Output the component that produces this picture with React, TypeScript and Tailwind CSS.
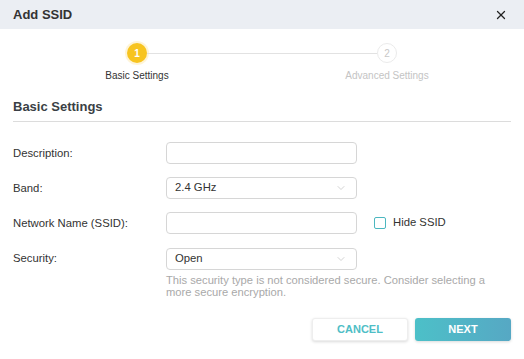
import { X, ChevronDown } from "lucide-react";

const font = { fontFamily: '"Liberation Sans", Arial, sans-serif' };

function Field({ label, children }: { label: string; children: React.ReactNode }) {
  return (
    <div className="flex items-start">
      <span className="w-[153px] h-[22px] leading-[22px] text-[11.3px] text-[#333]">{label}</span>
      <div className="flex-1">{children}</div>
    </div>
  );
}

function Input() {
  return <div className="w-[191px] h-[22px] rounded-[4px] border border-[#d6d6d6] bg-white" />;
}

function Select({ value }: { value: string }) {
  return (
    <div className="w-[191px] h-[22px] rounded-[4px] border border-[#d6d6d6] bg-white flex items-center justify-between pl-[8px] pr-[9px]">
      <span className="text-[11.3px] text-[#333]">{value}</span>
      <ChevronDown size={12} strokeWidth={1.5} className="text-[#c4c4c4]" />
    </div>
  );
}

export default function App() {
  return (
    <div className="w-[524px] h-[359px] bg-white overflow-hidden" style={font}>
      <header className="h-[29px] bg-[#ebeef3] flex items-center justify-between pl-[13px] pr-[16px]">
        <h1 className="text-[13px] font-bold text-[#333]">Add SSID</h1>
        <X size={14} strokeWidth={2.2} className="text-[#222]" />
      </header>

      {/* stepper */}
      <div className="pt-[14px]">
        <div className="flex items-center pl-[127px]">
          <div className="w-[20px] h-[20px] rounded-full bg-[#f7c420] shadow-[0_0_0_2px_rgba(247,196,32,0.18)] flex items-center justify-center text-[10px] font-bold text-white">
            1
          </div>
          <div className="w-[230px] h-px bg-[#e2e2e2]" />
          <div className="w-[20px] h-[20px] rounded-full bg-white border border-[#ebebeb] flex items-center justify-center text-[10px] text-[#c8c8c8]">
            2
          </div>
        </div>
        <div className="flex pl-[77px] mt-[5px] gap-[130px]">
          <span className="w-[120px] text-center text-[10px] text-[#333]">Basic Settings</span>
          <span className="w-[120px] text-center text-[10px] text-[#c4c4c4]">Advanced Settings</span>
        </div>
      </div>

      {/* section */}
      <div className="px-[13px] mt-[14px]">
        <h2 className="text-[13px] font-bold text-[#3a3f45] pb-[4px] border-b border-[#dcdcdc]">Basic Settings</h2>
      </div>

      <div className="px-[13px] mt-[20px] flex flex-col gap-[13px]">
        <Field label="Description:">
          <Input />
        </Field>
        <Field label="Band:">
          <Select value="2.4 GHz" />
        </Field>
        <Field label="Network Name (SSID):">
          <div className="flex items-center">
            <Input />
            <div className="ml-[17px] w-[12px] h-[12px] rounded-[2px] border border-[#4cb7c0] bg-white" />
            <span className="ml-[7px] text-[11.3px] text-[#333]">Hide SSID</span>
          </div>
        </Field>
        <Field label="Security:">
          <div className="mt-px">
            <Select value="Open" />
            <p className="mt-[4px] w-[325px] text-[11.2px] leading-[12px] text-[#a9a9a9]">
              This security type is not considered secure. Consider selecting a more secure encryption.
            </p>
          </div>
        </Field>
      </div>

      <div className="flex justify-end gap-[7px] pr-[13px] mt-[20px]">
        <button className="w-[96px] h-[23px] rounded-[3px] bg-white border border-[#eeeeee] shadow-[0_1px_3px_rgba(0,0,0,0.15)] text-[11px] font-bold text-[#4fbec6]">
          CANCEL
        </button>
        <button className="w-[96px] h-[23px] rounded-[3px] bg-gradient-to-r from-[#4cc0c8] to-[#56a8c4] shadow-[0_1px_3px_rgba(0,0,0,0.15)] text-[11px] font-bold text-white">
          NEXT
        </button>
      </div>
    </div>
  );
}
